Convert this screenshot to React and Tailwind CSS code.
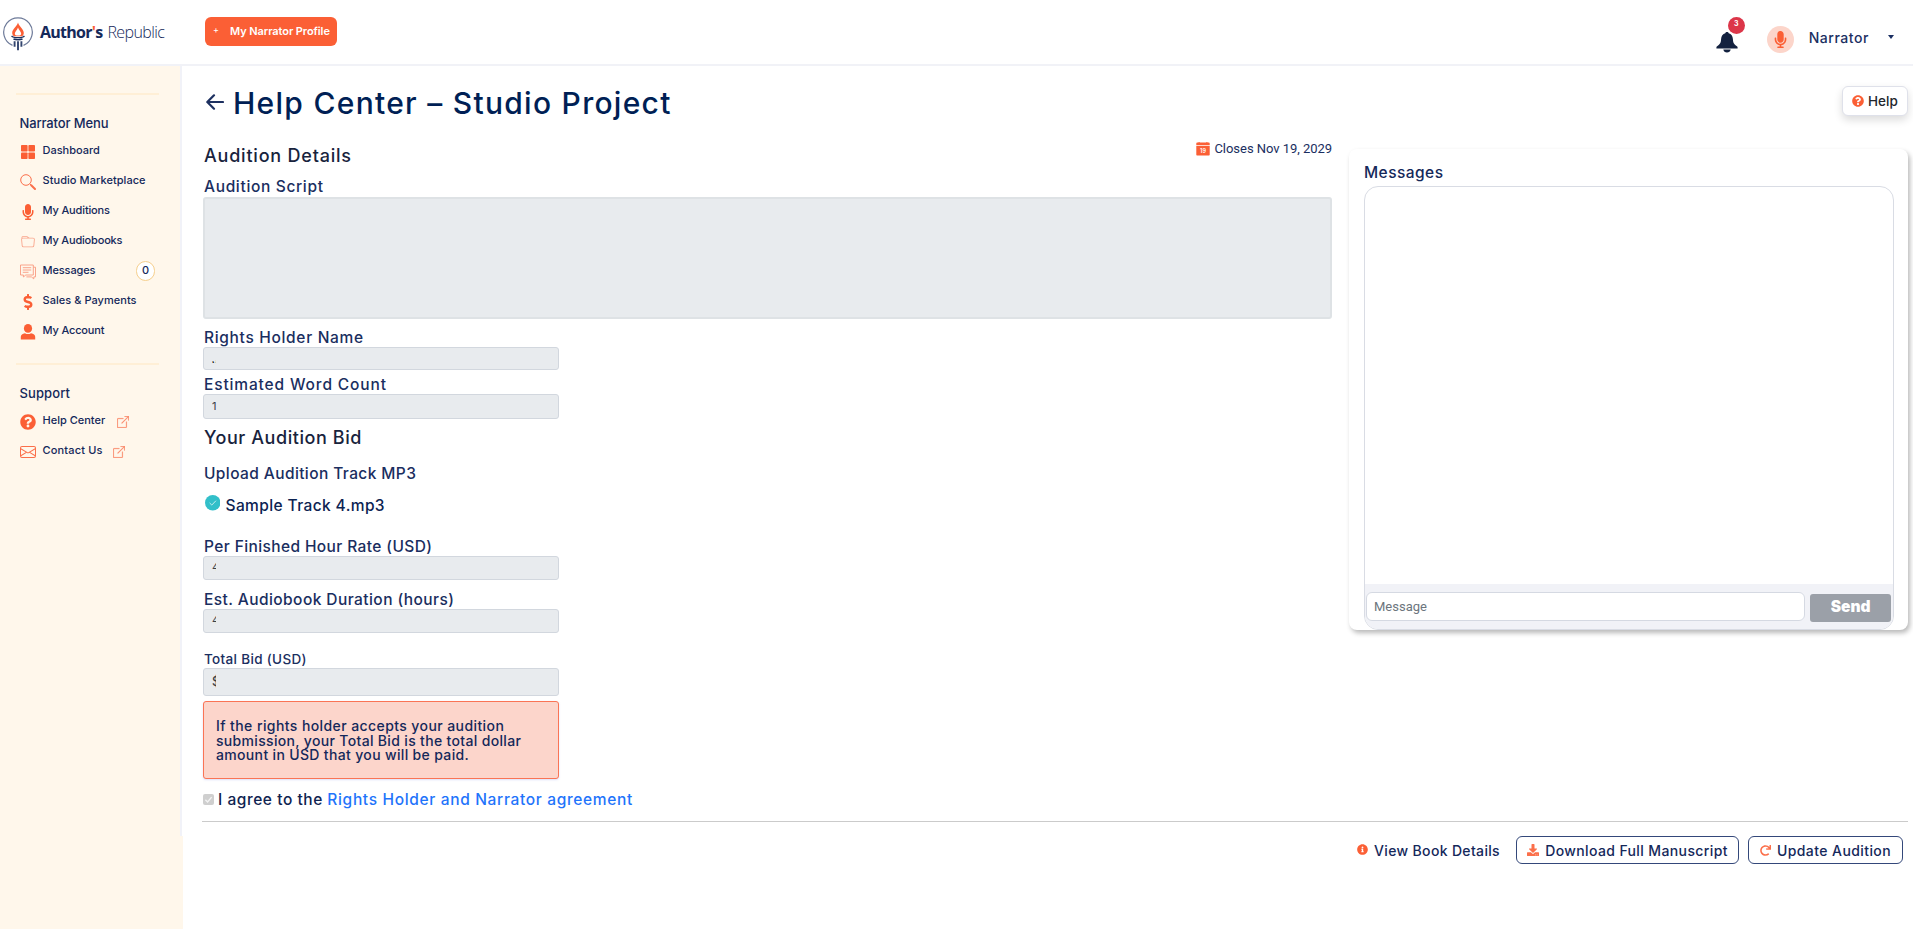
import { FaDollarSign, FaDownload, FaInfoCircle, FaMicrophone, FaQuestionCircle, FaRedo } from 'react-icons/fa';
import { BsBoxArrowUpRight, BsEnvelope, BsFolder } from 'react-icons/bs';

function GridIcon() {
  return (
    <svg viewBox="0 0 16 16" className="w-4 h-4" fill="#fb5f35">
      <rect x="1" y="1" width="6.6" height="6.6" rx="0.8" /><rect x="8.4" y="1" width="6.6" height="6.6" rx="0.8" />
      <rect x="1" y="8.4" width="6.6" height="6.6" rx="0.8" /><rect x="8.4" y="8.4" width="6.6" height="6.6" rx="0.8" />
    </svg>
  );
}

function SearchIcon() {
  return (
    <svg viewBox="0 0 16 16" className="w-4 h-4" fill="none" stroke="#fb6f4a">
      <circle cx="6" cy="6" r="5.3" strokeWidth="1" />
      <path d="M9.9 9.9 L11.3 11.3" strokeWidth="1" />
      <path d="M11.2 11.2 L15 15" strokeWidth="2" strokeLinecap="round" />
    </svg>
  );
}

function ChatIcon() {
  return (
    <svg viewBox="0 0 16 16" className="w-4 h-4" fill="none" stroke="#f99a80" strokeWidth="0.9" strokeLinejoin="round">
      <path d="M.5 1h12.800v10H5.800L3.400 13v-2H.5z" />
      <path d="M13.400 3.200h2.100v9.700h-1.700v2l-2.400-2H6.400" />
      <path d="M2.800 3.700h8.400M2.800 6h8.400M2.800 8.300h5.700" />
    </svg>
  );
}

function PersonIcon() {
  return (
    <svg viewBox="0 0 16 16" className="w-4 h-4" fill="#fb5f35">
      <ellipse cx="8" cy="4.4" rx="4.1" ry="4.4" />
      <path d="M.8 15.400v-2.600c0-2 1.700-3.300 4.200-3.600.9.6 1.900.9 3 .9s2.100-.3 3-.9c2.500.3 4.200 1.600 4.200 3.600v2.600z" />
    </svg>
  );
}

function BellIcon() {
  return (
    <svg viewBox="0 0 22 21" className="w-[22px] h-[21px]" fill="#13213f">
      <path d="M11 0c.9 0 1.500.5 1.700 1.200 2.600.8 4 2.900 4.200 5.800.2 3.800 1 5.200 4 7.200.5.300.7.700.7 1.300v.9H.4v-.9c0-.6.200-1 .7-1.300 3-2 3.800-3.400 4-7.200.2-2.900 1.600-5 4.200-5.800C9.500.5 10.100 0 11 0z" />
      <path d="M7.300 17.600h7.400c-.4 1.900-1.700 2.900-3.700 2.900s-3.300-1-3.700-2.900z" />
    </svg>
  );
}

function Logo() {
  return (
    <svg viewBox="0 0 30 34" className="w-[30px] h-[34px]" fill="none">
      <path d="M9.500 28.400A14.300 14.300 0 1 1 20.500 28.400" stroke="#6d7a99" strokeWidth="1.200" />
      <path d="M15 5.500c1 3.800 5.800 6.500 5.800 10.600 0 1.600-.8 2.700-1.800 3.200h-8c-1-.5-1.800-1.600-1.800-3.200 0-4.100 4.800-6.800 5.800-10.600z" fill="#fb5f35" />
      <path d="M15 10.500c.6 2.600 3.200 4.200 3.200 6.200 0 1.300-1.200 1.900-3.200 1.900s-3.200-.6-3.200-1.900c0-2 2.600-3.600 3.200-6.200z" fill="#fff" />
      <path d="M8.600 18.800c1.700 2.400 11.100 2.400 12.800 0M10.500 22c2.200 1 6.800 1 9 0" stroke="#1b2f5c" strokeWidth="1.400" />
      <path d="M11.600 24.200v5.600M15 24.200v9M18.400 24.200v5.600" stroke="#33456f" strokeWidth="1.900" />
    </svg>
  );
}

function CalendarIcon() {
  return (
    <svg viewBox="0 0 14 14" className="w-3.5 h-3.5">
      <path d="M.3 3.300V1.500c0-.5.300-.9.900-.9h1.400V0h1v.6h6.800V0h1v.6h1.400c.6 0 .9.400.9.900v1.800zM.3 4.100h13.400v8.500c0 .6-.4 1-1 1H1.300c-.6 0-1-.4-1-1z" fill="#fb5f35" />
      <text x="7" y="11.200" fontSize="5.500" textAnchor="middle" fill="#fff" fontFamily="Inter, sans-serif" fontWeight="600">19</text>
    </svg>
  );
}

const mainMenu = [
  { label: 'Dashboard', icon: <GridIcon />, cls: '' },
  { label: 'Studio Marketplace', icon: <SearchIcon />, cls: 'tracking-[0.06px]' },
  { label: 'My Auditions', icon: <FaMicrophone className="w-4 h-4 text-[#fb5f35]" />, cls: 'tracking-[-0.14px]' },
  { label: 'My Audiobooks', icon: <BsFolder className="w-3.5 h-3.5 text-[#f9a58c]" />, cls: 'tracking-[-0.18px]' },
  { label: 'Messages', icon: <ChatIcon />, cls: 'tracking-[-0.11px]', badge: 0 },
  { label: 'Sales & Payments', icon: <FaDollarSign className="w-4 h-4 text-[#fb5f35]" />, cls: 'tracking-[0.04px]' },
  { label: 'My Account', icon: <PersonIcon />, cls: 'tracking-[-0.16px]' },
];

const supportMenu = [
  { label: 'Help Center', icon: <FaQuestionCircle className="w-4 h-4 text-[#fb5f35]" />, cls: 'w-[74.5px]', external: true },
  { label: 'Contact Us', icon: <BsEnvelope className="w-4 h-4 text-[#fb6f4a]" />, cls: 'w-[70.5px] tracking-[0.17px]', external: true },
];

function MenuItem({ item }) {
  return (
    <li className="flex items-center h-[30px] pl-[19.5px]">
      <span className="w-4 flex justify-center mt-[3px]">{item.icon}</span>
      <span className={`ml-[7px] text-[11px] font-medium whitespace-nowrap text-[#14285a] ${item.cls}`}>{item.label}</span>
      {item.badge !== undefined && (
        <span className="ml-auto mr-[25px] w-[19px] h-5 rounded-full bg-white border border-[#f6cf8d] flex items-center justify-center text-[11px] font-medium text-[#14285a]">{item.badge}</span>
      )}
      {item.external && <BsBoxArrowUpRight className="w-3 h-3 mt-[3px] text-[#fb8a6b] stroke-[0.3]" />}
    </li>
  );
}

function Sidebar() {
  return (
    <aside className="w-[183px] shrink-0 flex flex-col">
      <div className="w-[182px] h-[770px] bg-[#fff7eb] border-r-2 border-[#f1f2f8] pt-[27px]">
        <div className="ml-4 w-[143px] h-0.5 bg-[#ffefd6]" />
        <h2 className="mt-[18px] pl-[19.5px] text-[13px] leading-5 font-medium tracking-[-0.13px] text-[#14285a]">Narrator Menu</h2>
        <ul className="mt-[2.5px]">{mainMenu.map((m) => <MenuItem key={m.label} item={m} />)}</ul>
        <div className="ml-4 mt-[17.5px] w-[143px] h-0.5 bg-[#ffefd6]" />
        <h2 className="mt-[18px] pl-[19.5px] text-[13px] leading-5 font-medium tracking-[0.11px] text-[#14285a]">Support</h2>
        <ul className="mt-[2px]">{supportMenu.map((m) => <MenuItem key={m.label} item={m} />)}</ul>
      </div>
      <div className="flex-1 bg-[#fff7eb]" />
    </aside>
  );
}

function Header() {
  return (
    <header className="h-[66px] shrink-0 border-b-2 border-[#f1f2f7] flex items-start">
      <div className="flex items-center w-[205px] pl-[3px] pt-[16.5px]">
        <Logo />
        <div className="ml-[7px] -mt-1 flex items-baseline whitespace-nowrap font-['Open_Sans',sans-serif] text-[16px] text-[#15295a]">
          <span className="font-bold tracking-[-0.75px]">Author<span className="text-[#fb5f35]">'</span>s</span>
          <span className="ml-[5px] font-light tracking-[-0.6px]">Republic</span>
        </div>
      </div>
      <button className="mt-[17px] w-[132px] h-[29px] rounded-md bg-[#fb5f35] text-white flex items-center pl-2">
        <span className="text-[9px] w-[17px] text-left -mt-1">+</span>
        <span className="text-[11px] font-semibold tracking-[-0.08px] whitespace-nowrap -mt-px">My Narrator Profile</span>
      </button>
      <div className="ml-auto flex items-start pr-[19px]">
        <div className="relative mt-[31.5px]">
          <BellIcon />
          <span className="absolute -top-[14.5px] left-3 w-[17px] h-[17px] rounded-full bg-[#dc3649] text-white text-[7px] font-bold leading-[14px] text-center">3</span>
        </div>
        <span className="ml-[29px] mt-[25.5px] w-[27px] h-[27px] rounded-full bg-[#fcd5ca] flex items-center justify-center">
          <FaMicrophone className="w-[17px] h-[17px] text-[#fb5f35]" />
        </span>
        <span className="ml-[15px] mt-[28px] text-[14px] leading-5 font-medium tracking-[0.55px] text-[#1b2f62]">Narrator</span>
        <span className="ml-[19px] mt-[35px] border-x-[3px] border-x-transparent border-t-4 border-t-[#1b2f62]" />
      </div>
    </header>
  );
}

const label = 'flex items-center font-medium whitespace-nowrap text-[#1a2e60]';
const field = 'w-[356px] bg-[#e8ebee] border border-[#d2d7de] rounded-[3px] flex items-center pl-2 text-[#3a4048]';

export default function App() {
  return (
    <div className="h-[929px] flex flex-col bg-white overflow-hidden font-['Inter',sans-serif]">
      <Header />
      <div className="flex flex-1">
        <Sidebar />
        <main className="flex-1 pl-5">
          <div className="h-[74px] flex items-center">
            <svg viewBox="0 0 18 16" className="ml-[2.5px] -mt-[3px] w-[18px] h-4" fill="none" stroke="#1d3060" strokeWidth="2.2" strokeLinecap="round" strokeLinejoin="round">
              <path d="M17 8H1.500M8 1.300L1.300 8L8 14.700" />
            </svg>
            <h1 className="ml-[9.5px] text-[30px] leading-9 font-medium tracking-[1.28px] text-[#001f55] whitespace-nowrap">Help Center – Studio Project</h1>
            <button className="ml-auto mr-[5px] -mt-1 w-[66px] h-[30px] rounded-md border border-[#dfe1ea] bg-white shadow-[0_4px_8px_rgba(0,0,0,0.14)] flex items-center pl-[9px]">
              <FaQuestionCircle className="w-3 h-3 text-[#fb5f35]" />
              <span className="ml-1 text-[13.5px] font-medium text-[#22262c]">Help</span>
            </button>
          </div>

          <div className="flex items-start h-[681px]">
            <section className="w-[1129px]">
              <div className="flex justify-between h-[30px]">
                <h2 className="ml-px flex items-center text-[18px] font-medium tracking-[0.79px] text-[#18233d]">Audition Details</h2>
                <div className="flex items-center h-[18px] font-['Roboto',sans-serif] text-[13px] text-[#1a2e60]">
                  <CalendarIcon />
                  <span className="ml-1 tracking-[-0.04px]">Closes Nov 19, 2029</span>
                </div>
              </div>
              <div className={`${label} ml-px mt-[7px] h-5 text-[15.5px] tracking-[0.66px]`}>Audition Script</div>
              <div className="h-[122px] bg-[#e8ebee] border-2 border-[#dee2e5] rounded-[3px]" />

              <div className={`${label} ml-px mt-[9px] h-[19px] text-[15.5px] tracking-[0.68px]`}>Rights Holder Name</div>
              <div className={`${field} h-[23px]`}>
                <span className="mt-[5px] flex items-end w-[3.5px] h-[3px] overflow-hidden text-[11px] leading-[6px] text-black">J</span>
              </div>

              <div className={`${label} ml-px mt-1.5 h-[18px] text-[15.5px] tracking-[0.86px]`}>Estimated Word Count</div>
              <div className={`${field} h-[25px]`}>
                <span className="w-[5px] overflow-hidden text-[11px] -mt-px">1</span>
              </div>

              <h2 className="ml-px flex items-center h-9 text-[18px] font-medium tracking-[0.57px] text-[#18233d]">Your Audition Bid</h2>
              <div className={`${label} ml-px h-[38px] text-[15.5px] tracking-[0.4px]`}>Upload Audition Track MP3</div>
              <div className="flex items-center h-[26px]">
                <svg viewBox="0 0 16 16" className="ml-[1.5px] -mt-1.5 w-[15.5px] h-[15.5px]" fill="none">
                  <circle cx="8" cy="8" r="8" fill="#32bfc9" />
                  <path d="M4.800 8.200l2.200 2.200 4.300-4.500" stroke="#c5eef0" strokeWidth="1" />
                </svg>
                <span className="ml-[5.5px] text-[15.5px] font-medium tracking-[0.39px] text-[#0c2352]">Sample Track 4.mp3</span>
              </div>

              <div className={`${label} ml-px mt-[19px] h-[18px] text-[15.5px] tracking-[0.39px]`}>Per Finished Hour Rate (USD)</div>
              <div className={`${field} h-6`}>
                <span className="flex items-start w-1 h-[9px] overflow-hidden text-[11px] leading-[9px] -mt-0.5">4</span>
              </div>

              <div className={`${label} ml-px mt-2.5 h-[19px] text-[15.5px] tracking-[0.43px]`}>Est. Audiobook Duration (hours)</div>
              <div className={`${field} h-6`}>
                <span className="flex items-start w-1 h-[9px] overflow-hidden text-[11px] leading-[9px] -mt-0.5">4</span>
              </div>

              <div className={`${label} ml-px mt-[18px] h-[17px] text-[13.5px] tracking-[0.33px]`}>Total Bid (USD)</div>
              <div className={`${field} h-7`}>
                <span className="w-1 overflow-hidden text-[12.5px] font-medium">$</span>
              </div>

              <div className="mt-[5px] w-[356px] h-[78px] pt-[17px] pl-3 rounded-[3px] bg-[#fcd5cb] border border-[#fa7455] shadow-[0_1px_2px_rgba(120,130,230,0.25)] text-[14px] leading-[14.6px] font-medium text-[#14285a] whitespace-nowrap">
                <p className="tracking-[0.41px]">If the rights holder accepts your audition</p>
                <p className="tracking-[0.33px]">submission, your Total Bid is the total dollar</p>
                <p className="tracking-[0.34px]">amount in USD that you will be paid.</p>
              </div>

              <div className="mt-[11px] h-5 flex items-center text-[15.5px] font-medium whitespace-nowrap text-[#0f2350]">
                <span className="w-[11px] h-[11px] -mt-0.5 rounded-[2px] bg-[#cfcfcf] flex items-center justify-center">
                  <svg viewBox="0 0 10 10" className="w-[9px] h-[9px]" fill="none" stroke="#f3f3f3" strokeWidth="1.5"><path d="M1.500 5.300L4 7.800L8.500 2.300" /></svg>
                </span>
                <span className="ml-1 tracking-[0.55px]">I agree to the</span>
                <a href="#" className="ml-[4.5px] text-[#1f74fb] tracking-[0.66px]">Rights Holder and Narrator agreement</a>
              </div>
            </section>

            <section className="mt-[9px] ml-[17px] w-[559px] h-[481px] rounded-lg bg-white shadow-[2px_3px_5px_rgba(0,0,0,0.28)] pl-[15px] pr-3.5 flex flex-col">
              <h3 className="mt-[14px] h-[23px] leading-5 text-[15.5px] font-medium tracking-[0.46px] text-[#14285a]">Messages</h3>
              <div className="h-[444px] rounded-[14px] border border-[#d9dce4] overflow-hidden flex flex-col">
                <div className="flex-1" />
                <div className="h-[45px] bg-[#f1f2f7] flex items-start gap-[5px] pl-px pr-0.5 pt-2">
                  <input className="w-[440px] h-[29px] rounded-md border border-[#d5d9e2] bg-white px-[7px] font-['Roboto',sans-serif] text-[13px] placeholder:text-[#6c757d]" placeholder="Message" />
                  <button className="mt-0.5 w-[81px] h-7 rounded-[3px] bg-[#9ba0a8] text-white text-[15.5px] font-black leading-none pb-0.5">Send</button>
                </div>
              </div>
            </section>
          </div>

          <div className="-ml-px mr-[5px] border-t border-[#cbcbcb]" />
          <div className="mt-[14px] mr-2.5 flex justify-end items-center h-7 text-[14px] font-medium whitespace-nowrap text-[#14285a]">
            <FaInfoCircle className="w-[11px] h-[11px] -mt-0.5 text-[#fb5f35]" />
            <span className="ml-1.5 mr-4 mt-px tracking-[0.34px]">View Book Details</span>
            <button className="w-[223px] h-7 rounded-md border border-[#34487a] flex items-center justify-center">
              <FaDownload className="w-3 h-3 mr-1.5 text-[#fb6f4a]" />
              <span className="tracking-[0.38px]">Download Full Manuscript</span>
            </button>
            <button className="ml-[9px] w-[155px] h-7 rounded-md border border-[#34487a] flex items-center justify-center">
              <FaRedo className="w-[11px] h-[11px] mr-1.5 text-[#fb6f4a]" />
              <span className="tracking-[0.41px]">Update Audition</span>
            </button>
          </div>
        </main>
      </div>
    </div>
  );
}
